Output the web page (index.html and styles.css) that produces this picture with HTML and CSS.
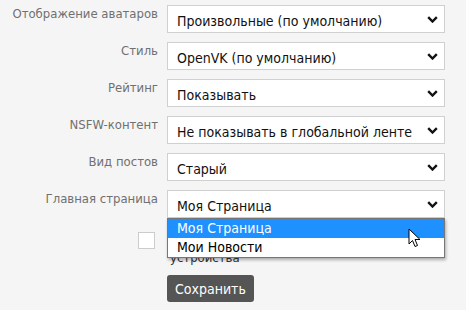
FILE: index.html
```html
<!DOCTYPE html>
<html>
<head>
	<title>Настройки</title>
	<meta charset="utf-8" />
	<link rel="stylesheet" href="styles.css">
</head>
<body>
	<form class="settings">
		<label class="name">Отображение аватаров</label>
		<div class="field">
			<select><option>Произвольные (по умолчанию)</option></select>
			<svg class="arrow" viewBox="0 0 11 7"><path d="M1.2 1.2 L5.5 5.5 L9.8 1.2" /></svg>
		</div>

		<label class="name">Стиль</label>
		<div class="field">
			<select><option>OpenVK (по умолчанию)</option></select>
			<svg class="arrow" viewBox="0 0 11 7"><path d="M1.2 1.2 L5.5 5.5 L9.8 1.2" /></svg>
		</div>

		<label class="name">Рейтинг</label>
		<div class="field">
			<select><option>Показывать</option></select>
			<svg class="arrow" viewBox="0 0 11 7"><path d="M1.2 1.2 L5.5 5.5 L9.8 1.2" /></svg>
		</div>

		<label class="name">NSFW-контент</label>
		<div class="field">
			<select><option>Не показывать в глобальной ленте</option></select>
			<svg class="arrow" viewBox="0 0 11 7"><path d="M1.2 1.2 L5.5 5.5 L9.8 1.2" /></svg>
		</div>

		<label class="name">Вид постов</label>
		<div class="field">
			<select><option>Старый</option></select>
			<svg class="arrow" viewBox="0 0 11 7"><path d="M1.2 1.2 L5.5 5.5 L9.8 1.2" /></svg>
		</div>

		<label class="name">Главная страница</label>
		<div class="field">
			<select><option>Моя Страница</option><option>Мои Новости</option></select>
			<svg class="arrow" viewBox="0 0 11 7"><path d="M1.2 1.2 L5.5 5.5 L9.8 1.2" /></svg>
			<ul class="popup">
				<li class="active">Моя Страница</li>
				<li>Мои Новости</li>
			</ul>
			<svg class="cursor" viewBox="0 0 13 20"><path d="M1 1 L1 16 L4.5 12.5 L7 18.5 L9.5 17.5 L7 11.5 L12 11.5 Z" /></svg>
		</div>

		<div class="check"><input type="checkbox"></div>
		<div class="check-text">устройства</div>

		<div></div>
		<div><button type="button" class="save">Сохранить</button></div>
	</form>
</body>
</html>
```

FILE: styles.css
```css
*{
	padding: 0px;
	margin: 0px;
	box-sizing: border-box;
}
body{
	background: #f5f5f5;
	font-family: Tahoma, "DejaVu Sans Condensed", "DejaVu Sans", sans-serif;
	font-size: 13px;
}
.settings{
	display: grid;
	grid-template-columns: 158px 278px;
	column-gap: 9px;
	row-gap: 9px;
	padding-top: 5px;
}
.name{
	text-align: right;
	color: #707070;
	padding-top: 1px;
}
.field{
	position: relative;
	height: 28px;
}
.field select{
	appearance: none;
	-webkit-appearance: none;
	width: 100%;
	height: 28px;
	border: 1px solid #d0d0d0;
	background: #fff;
	color: #111;
	font: inherit;
	font-size: 14px;
	padding: 3px 0 0 9px;
	outline: none;
}
.arrow{
	position: absolute;
	right: 7px;
	top: 11px;
	width: 11px;
	height: 7px;
	fill: none;
	stroke: #111;
	stroke-width: 2.4;
}
.popup{
	position: absolute;
	left: 0;
	top: 28px;
	width: 278px;
	list-style: none;
	background: #fff;
	border: 1px solid #767676;
	box-shadow: 1px 2px 3px rgba(0,0,0,0.3);
	font-size: 14px;
	z-index: 2;
}
.popup li{
	height: 19px;
	line-height: 19px;
	padding-left: 9px;
	color: #000;
}
.popup .active{
	background: #1e90ff;
	color: #fff;
}
.cursor{
	position: absolute;
	left: 241px;
	top: 38px;
	width: 13px;
	height: 20px;
	fill: #fff;
	stroke: #000;
	stroke-width: 1;
	z-index: 3;
}
.check{
	display: flex;
	justify-content: flex-end;
	padding-top: 5px;
}
.check input{
	appearance: none;
	-webkit-appearance: none;
	width: 17px;
	height: 17px;
	border: 1px solid #ccc;
	background: #fff;
	margin-right: 3px;
}
.check-text{
	color: #333;
	line-height: 17px;
	padding: 22px 0 0 3px;
}
.save{
	height: 27px;
	padding: 0 8px;
	border: none;
	border-radius: 3px;
	background: #555;
	color: #fff;
	font: inherit;
	font-size: 14px;
}
```
